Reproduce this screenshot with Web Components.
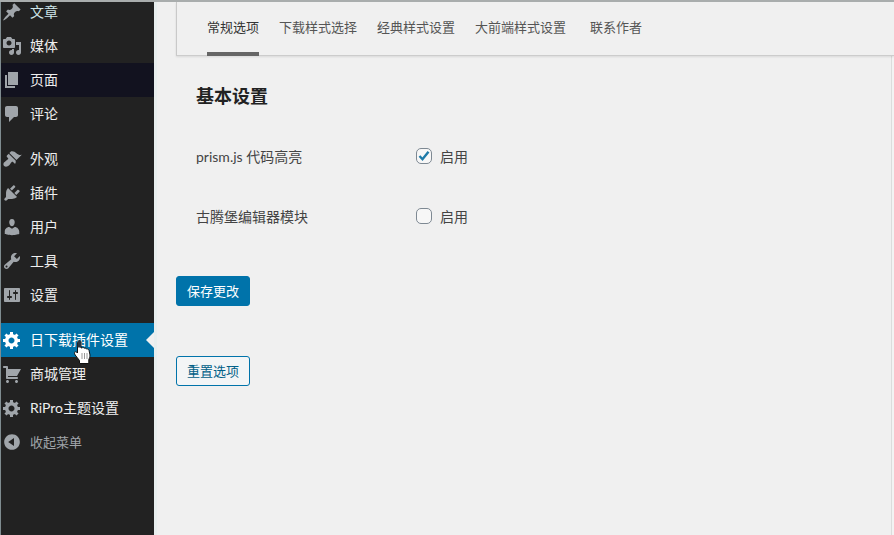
<!DOCTYPE html>
<html lang="zh-CN"><head><meta charset="utf-8">
<style>
html,body{margin:0;height:100%;overflow:hidden}
body{width:894px;height:535px;font-family:Lato,"Noto Sans CJK SC",sans-serif;background:#f0f0f0}
</style></head><body>
<wp-shell>
<side-menu slot="side">
 <menu-item icon="post" tint="#a8c0c4">文章</menu-item>
 <menu-item icon="media">媒体</menu-item>
 <menu-item icon="page" hover>页面</menu-item>
 <menu-item icon="comments">评论</menu-item>
 <menu-sep></menu-sep>
 <menu-item icon="appearance">外观</menu-item>
 <menu-item icon="plugins">插件</menu-item>
 <menu-item icon="users">用户</menu-item>
 <menu-item icon="tools">工具</menu-item>
 <menu-item icon="settings">设置</menu-item>
 <menu-sep></menu-sep>
 <menu-item icon="gear" current>日下载插件设置<hand-cursor></hand-cursor></menu-item>
 <menu-item icon="cart">商城管理</menu-item>
 <menu-item icon="gear">RiPro主题设置</menu-item>
 <menu-item icon="collapse" muted>收起菜单</menu-item>
</side-menu>
<tab-bar>
 <tab-item active>常规选项</tab-item>
 <tab-item>下载样式选择</tab-item>
 <tab-item>经典样式设置</tab-item>
 <tab-item>大前端样式设置</tab-item>
 <tab-item style="margin-left:4px">联系作者</tab-item>
</tab-bar>
<settings-form>
 <setting-row label="prism.js 代码高亮" checked></setting-row>
 <setting-row label="古腾堡编辑器模块"></setting-row>
</settings-form>
</wp-shell>
<script>
const ICONS={
post:"M10.44 3.02l1.82-1.82 6.36 6.35-1.83 1.82c-1.05-.68-2.48-.57-3.41.36l-.75.75c-.92.93-1.04 2.35-.35 3.41l-1.83 1.82-2.41-2.41-2.8 2.79c-.42.42-3.38 2.71-3.8 2.29s1.86-3.39 2.28-3.81l2.79-2.79L4.1 9.36l1.83-1.82c1.05.69 2.48.57 3.4-.36l.75-.75c.93-.92 1.05-2.35.36-3.41z",
media:"M13 11V4c0-.55-.45-1-1-1h-1.67L9 1H5L3.67 3H2c-.55 0-1 .45-1 1v7c0 .55.45 1 1 1h10c.55 0 1-.45 1-1zM7 4.5c1.38 0 2.5 1.12 2.5 2.5S8.38 9.5 7 9.5 4.5 8.38 4.5 7 5.62 4.5 7 4.5zM14 6h5v10.5c0 1.38-1.12 2.5-2.5 2.5S14 17.88 14 16.5s1.12-2.5 2.5-2.5c.17 0 .34.02.5.05V9h-3V6zm-4 8.05V13h2v3.5c0 1.38-1.12 2.5-2.5 2.5S7 17.88 7 16.5 8.12 14 9.5 14c.17 0 .34.02.5.05z",
page:"M6 15V2h10v13H6zm-1 1h8v2H3V5h2v11z",
comments:"M5 2h9c1.1 0 2 .9 2 2v7c0 1.1-.9 2-2 2h-2l-5 5v-5H5c-1.1 0-2-.9-2-2V4c0-1.1.9-2 2-2z",
appearance:"M14.48 11.06L7.41 3.99l1.5-1.5c.5-.56 2.3-.47 3.51.32 1.21.8 1.43 1.28 2.91 2.1 1.18.64 2.45 1.26 4.45.85zm-.71.71L6.7 4.7 4.93 6.47c-.39.39-.39 1.02 0 1.41l1.06 1.06c.39.39.39 1.03 0 1.42-.6.6-1.43 1.11-2.21 1.69-.35.26-.7.53-1.01.84C1.43 13.23.78 15.6 2.12 16.95c1.34 1.34 3.71.69 5.05-.65.31-.31.58-.66.84-1.01.58-.78 1.09-1.61 1.69-2.21.39-.39 1.03-.39 1.42 0l1.06 1.06c.39.39 1.02.39 1.41 0z",
plugins:"M13.11 4.36L9.87 7.6 8 5.73l3.24-3.24c.35-.34 1.05-.2 1.56.32.52.51.66 1.21.31 1.55zm-8 1.77l.91-1.12 9.01 9.01-1.19.84c-.71.71-2.63 1.16-3.82 1.16H6.14L4.9 17.26c-.59.59-1.54.59-2.12 0-.59-.58-.59-1.53 0-2.12l1.24-1.24v-3.88c0-1.13.4-3.19 1.09-3.89zm7.26 3.97l3.24-3.24c.34-.35 1.04-.21 1.55.31.52.51.66 1.21.31 1.55l-3.24 3.25z",
users:"M10 9.25c-2.27 0-2.73-3.44-2.73-3.44C7 4.02 7.82 2 9.97 2c2.16 0 2.98 2.02 2.71 3.81 0 0-.41 3.44-2.68 3.44zm0 2.57L12.72 10c2.39 0 4.52 2.33 4.52 4.53v2.49s-3.65 1.13-7.24 1.13c-3.65 0-7.24-1.13-7.24-1.13v-2.49c0-2.25 1.94-4.48 4.47-4.48z",
tools:"M16.68 9.77c-1.34 1.34-3.3 1.67-4.95.99l-5.41 6.52c-.99.99-2.59.99-3.58 0s-.99-2.59 0-3.57l6.52-5.42c-.68-1.65-.35-3.61.99-4.95 1.28-1.28 3.12-1.62 4.72-1.06l-2.89 2.89 2.82 2.82 2.86-2.87c.53 1.58.18 3.39-1.08 4.65zM3.81 16.21c.4.39 1.04.39 1.43 0 .4-.4.4-1.04 0-1.43-.39-.4-1.03-.4-1.43 0-.39.39-.39 1.03 0 1.43z",
settings:"M18 16V4c0-.55-.45-1-1-1H3c-.55 0-1 .45-1 1v12c0 .55.45 1 1 1h14c.55 0 1-.45 1-1zM8 11h1c.55 0 1 .45 1 1s-.45 1-1 1H8v1.5c0 .28-.22.5-.5.5s-.5-.22-.5-.5V13H6c-.55 0-1-.45-1-1s.45-1 1-1h1V5.5c0-.28.22-.5.5-.5s.5.22.5.5V11zm5-2h-1c-.55 0-1-.45-1-1s.45-1 1-1h1V5.5c0-.28.22-.5.5-.5s.5.22.5.5V7h1c.55 0 1 .45 1 1s-.45 1-1 1h-1v5.5c0 .28-.22.5-.5.5s-.5-.22-.5-.5V9z",
gear:"M18 12h-2.18c-.17.7-.44 1.35-.81 1.93l1.54 1.54-2.1 2.1-1.54-1.54c-.58.36-1.23.63-1.91.79V19H8v-2.18c-.68-.16-1.33-.43-1.91-.79l-1.54 1.54-2.12-2.12 1.54-1.54c-.36-.58-.63-1.23-.79-1.91H1V9.03h2.17c.16-.7.44-1.35.8-1.94L2.43 5.55l2.1-2.1 1.54 1.54c.58-.37 1.24-.64 1.93-.81V2h3v2.18c.68.16 1.33.43 1.91.79l1.54-1.54 2.12 2.12-1.54 1.54c.36.59.64 1.24.8 1.94H18V12zm-8.5 1.5c1.66 0 3-1.34 3-3s-1.34-3-3-3-3 1.34-3 3 1.34 3 3 3z",
cart:"M6 13h9c.55 0 1 .45 1 1s-.45 1-1 1H5c-.55 0-1-.45-1-1V4H2c-.55 0-1-.45-1-1s.45-1 1-1h3c.55 0 1 .45 1 1v2h13l-4 7H6v1zm-.5 3c.83 0 1.5.67 1.5 1.5S6.33 19 5.5 19 4 18.33 4 17.5 4.67 16 5.5 16zm9 0c.83 0 1.5.67 1.5 1.5s-.67 1.5-1.5 1.5-1.5-.67-1.5-1.5.67-1.5 1.5-1.5z",
collapse:"M10 2.16c4.33 0 7.84 3.51 7.84 7.84s-3.51 7.84-7.84 7.84S2.16 14.33 2.16 10 5.71 2.16 10 2.16zm2 11.72V6.12L6.18 9.97z"
};
function def(name,css,html){
  customElements.define(name,class extends HTMLElement{
    constructor(){super();this.attachShadow({mode:'open'}).innerHTML='<style>'+css+'</style>'+(typeof html==='function'?'':html);}
    connectedCallback(){if(typeof html==='function')this.shadowRoot.innerHTML='<style>'+css+'</style>'+html(this);}
  });
}
def('wp-shell',`:host{display:grid;grid-template-columns:154px 1fr;width:894px;height:535px;overflow:hidden;background:#f3f3f3;border-top:2px solid #a9adad;box-sizing:border-box}
 .main{min-width:0;padding-left:19px;display:flex;flex-direction:column;background:#f0f0f0;border-left:3px solid #e8eeee;border-right:1px solid #dcdcdc;border-bottom:1px solid #dcdcdc;margin:0 2px 1px 0}`,
 `<slot name="side"></slot><div class="main"><slot></slot></div>`);
def('side-menu',`:host{display:flex;flex-direction:column;background:#222;border-left:1px solid #7f8c90;margin-top:-7px;height:545px;box-sizing:border-box}`,`<slot></slot>`);
def('menu-sep',`:host{display:block;height:11px}`,``);
def('menu-item',`:host{display:flex;align-items:center;height:34px;font-size:14px;color:#eee;position:relative;flex:none;padding-left:1px}
 :host([hover]){background:#12121f}
 :host([current]){background:#0073aa;color:#fff}
 :host([muted]){color:#a0a5aa;font-size:13px}
 svg{width:20px;height:20px;flex:none;fill:#a0a5aa;margin-right:8px}
 :host([current]) svg{fill:#fff}
 .arrow{position:absolute;right:0;top:9px;border:8px solid transparent;border-right-color:#f0f0f0;border-left:0}
 .t{white-space:nowrap;line-height:34px}`,
 el=>`<svg viewBox="0 0 20 20"><path d="${ICONS[el.getAttribute('icon')]}"/></svg><span class="t" style="${el.getAttribute('tint')?'color:#cfe6ea':''}"><slot></slot></span>${el.hasAttribute('current')?'<i class="arrow"></i>':''}`);
def('hand-cursor',`:host{position:absolute;left:73px;top:17px;width:17px;height:24px;display:block}svg{display:block}`,
 `<svg width="17" height="24" viewBox="0 0 17 24"><path d="M4.500 1C5.500.3 7 .8 7 2V8L8.500 7.600C9.500 7.400 10.100 7.800 10.300 8.200 11.100 7.800 12.100 8.200 12.400 9 13.300 8.600 14.800 9.200 15 10.200L16 15C16 17 15.300 18.500 14.800 19.500V23.500H5.500V20.500C4.500 19 2.500 17 1.200 15 .3 13.500 0 12.500 .7 12 1.500 11.500 2.800 12 3.500 13V2.500C3.500 1.800 4 1.300 4.500 1Z" fill="#fff" stroke="#111"/><path d="M4.500 1C5.500.3 7 .8 7 2V7.500H3.500V2.500C3.500 1.800 4 1.300 4.500 1Z" fill="#2a3440"/><path d="M8 13v6M10.500 13v6M13 13v6" stroke="#999" fill="none"/></svg>`);
def('tab-bar',`:host{display:flex;align-items:stretch;gap:20px;height:54px;padding-left:30px;margin-right:-3px;flex:none;background:#f0f0f0;border-left:1px solid #c9c9c9;border-bottom:1px solid #ccc;box-shadow:0 1px 2px rgba(0,0,0,.1);box-sizing:border-box}`,`<slot></slot>`);
def('tab-item',`:host{display:flex;align-items:center;font-size:13px;color:#555;border-bottom:4px solid transparent;margin-bottom:-1px;padding-bottom:1px;box-sizing:border-box;white-space:nowrap}
 :host([active]){color:#333;border-bottom-color:#666}`,`<slot></slot>`);
def('settings-form',`:host{display:block;flex:1}
 h2{margin:0;font-size:18px;font-weight:700;color:#222;line-height:26px;padding:27px 0 0 20px}
 .rows{padding:17px 0 0 20px;display:flex;flex-direction:column}
 .actions{display:flex;flex-direction:column;align-items:flex-start;gap:50px;padding-top:30px}
 button{font:13px/28px Lato,"Noto Sans CJK SC",sans-serif;height:30px;padding:0 10px;border-radius:3px;border:1px solid #0073aa;background:#f3f5f6;color:#016087;box-sizing:border-box}
 button.p{background:#0073aa;color:#fff}`,
 `<h2>基本设置</h2><div class="rows"><slot></slot></div><div class="actions"><button class="p">保存更改</button><button>重置选项</button></div>`);
def('setting-row',`:host{display:grid;grid-template-columns:220px 1fr;align-items:center;height:60px;font-size:14px;color:#444}
 .c{display:flex;align-items:center;gap:8px;color:#444}
 .b{width:16px;height:16px;border:1px solid #7e8993;border-radius:5px;background:#f7f7f7;box-sizing:border-box;display:flex;align-items:center;justify-content:center}
 .b svg{display:block}`,
 el=>`<span>${el.getAttribute('label')}</span><span class="c"><span class="b">${el.hasAttribute('checked')?'<svg width="14" height="14" viewBox="0 0 14 14"><path d="M2.500 7l3 3.200L11.500 2.800" fill="none" stroke="#1e7aa8" stroke-width="2.400"/></svg>':''}</span>启用</span>`);
</script>
</body></html>
